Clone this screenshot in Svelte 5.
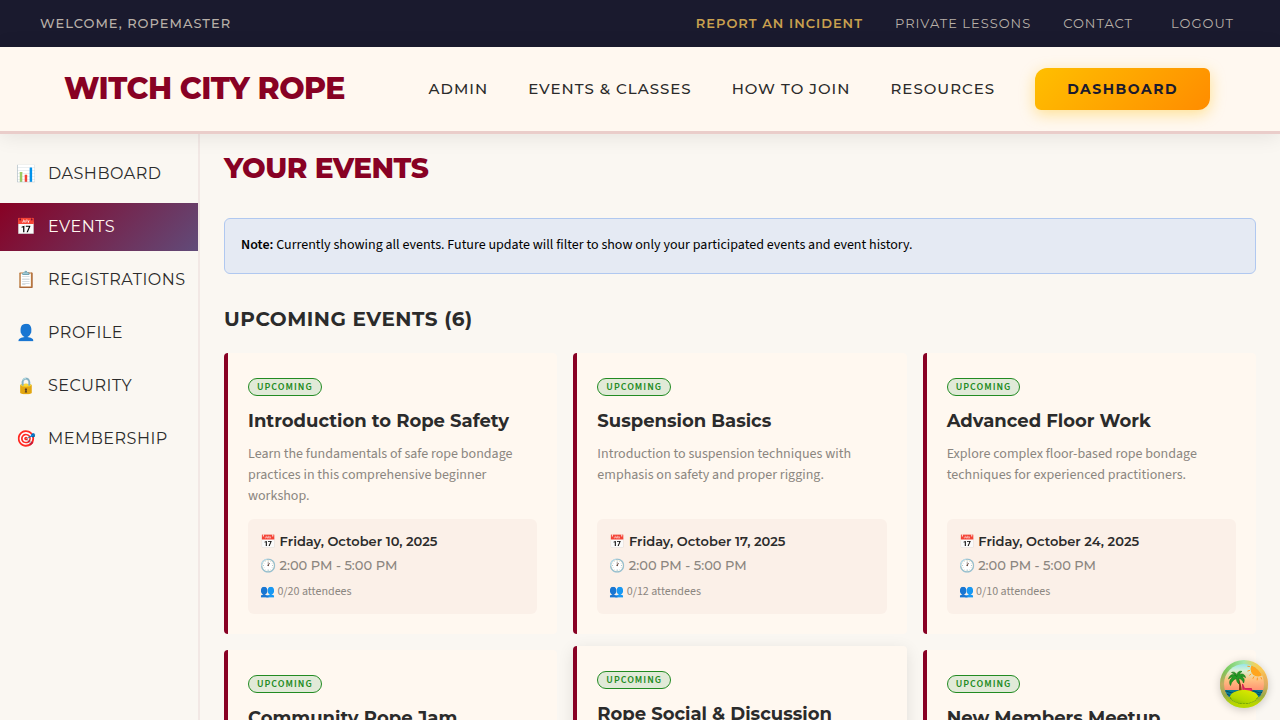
<script>
  const navLinks = ['Admin', 'Events & Classes', 'How to Join', 'Resources'];

  const sections = [
    { icon: '📊', label: 'Dashboard' },
    { icon: '📅', label: 'Events', active: true },
    { icon: '📋', label: 'Registrations' },
    { icon: '👤', label: 'Profile' },
    { icon: '🔒', label: 'Security' },
    { icon: '🎯', label: 'Membership' },
  ];

  const events = [
    {
      title: 'Introduction to Rope Safety',
      text: 'Learn the fundamentals of safe rope bondage practices in this comprehensive beginner workshop.',
      date: 'Friday, October 10, 2025',
      time: '2:00 PM - 5:00 PM',
      seats: '0/20',
    },
    {
      title: 'Suspension Basics',
      text: 'Introduction to suspension techniques with emphasis on safety and proper rigging.',
      date: 'Friday, October 17, 2025',
      time: '2:00 PM - 5:00 PM',
      seats: '0/12',
    },
    {
      title: 'Advanced Floor Work',
      text: 'Explore complex floor-based rope bondage techniques for experienced practitioners.',
      date: 'Friday, October 24, 2025',
      time: '2:00 PM - 5:00 PM',
      seats: '0/10',
    },
    { title: 'Community Rope Jam' },
    { title: 'Rope Social & Discussion', raised: true },
    { title: 'New Members Meetup' },
  ];
</script>

<div class="page">
  <div class="utility">
    <span class="welcome">Welcome, RopeMaster</span>
    <nav class="utility-links">
      <a class="report" href="#incident">Report an Incident</a>
      <a href="#lessons">Private Lessons</a>
      <a href="#contact">Contact</a>
      <button type="button">Logout</button>
    </nav>
  </div>

  <header class="header">
    <a class="brand" href="#home">Witch City Rope</a>
    <nav class="nav">
      {#each navLinks as link}
        <a href="#nav">{link}</a>
      {/each}
      <a class="cta" href="#dashboard">Dashboard</a>
    </nav>
  </header>

  <div class="body">
    <aside class="sidebar">
      <nav>
        {#each sections as item}
          <a class="side-link" class:active={item.active} href="#section">
            <span class="side-icon">{item.icon}</span>
            <span>{item.label}</span>
          </a>
        {/each}
      </nav>
    </aside>

    <main class="main">
      <h1>Your Events</h1>
      <p class="note">
        <strong>Note:</strong> Currently showing all events. Future update will filter to show only your participated events and event history.
      </p>
      <h2>Upcoming Events (6)</h2>
      <div class="grid">
        {#each events as event}
          <article class="card" class:raised={event.raised}>
            <span class="badge">Upcoming</span>
            <h3>{event.title}</h3>
            {#if event.text}
              <p class="desc">{event.text}</p>
              <div class="info">
                <p class="date">📅 {event.date}</p>
                <p class="time">🕐 {event.time}</p>
                <p class="seats">👥 {event.seats} attendees</p>
              </div>
            {/if}
          </article>
        {/each}
      </div>
    </main>
  </div>

  <button class="island" type="button" aria-label="Open tools">
    <svg viewBox="0 0 48 48" width="48" height="48" aria-hidden="true">
      <defs>
        <linearGradient id="rim-top" x1="0" y1="0" x2="1" y2="0">
          <stop offset="0" stop-color="#6cc040" />
          <stop offset="0.5" stop-color="#a5e8b0" />
          <stop offset="0.75" stop-color="#f4cf58" />
          <stop offset="1" stop-color="#ffc04a" />
        </linearGradient>
        <linearGradient id="rim-low" x1="0" y1="0" x2="0" y2="1">
          <stop offset="0.2" stop-color="#d89a68" stop-opacity="0" />
          <stop offset="0.5" stop-color="#d8a868" stop-opacity="0.8" />
          <stop offset="0.74" stop-color="#98aa4a" />
          <stop offset="0.9" stop-color="#b8d600" />
        </linearGradient>
        <linearGradient id="sky" x1="0" y1="0" x2="0" y2="1">
          <stop offset="0" stop-color="#75dcf4" />
          <stop offset="0.22" stop-color="#d6f2d6" />
          <stop offset="0.4" stop-color="#ffc483" />
          <stop offset="0.65" stop-color="#ff8f70" />
        </linearGradient>
        <linearGradient id="hill" x1="0.2" y1="1" x2="0.8" y2="0">
          <stop offset="0" stop-color="#6fae00" />
          <stop offset="0.4" stop-color="#b3d800" />
          <stop offset="1" stop-color="#e0ea00" />
        </linearGradient>
        <clipPath id="port"><circle cx="24" cy="24" r="20" /></clipPath>
      </defs>
      <circle cx="24" cy="24" r="24" fill="url(#rim-top)" />
      <circle cx="24" cy="24" r="24" fill="url(#rim-low)" />
      <g clip-path="url(#port)">
        <rect width="48" height="48" fill="url(#sky)" />
        <circle cx="38" cy="9" r="7.5" fill="#ffa51e" />
        <g stroke="#ff9a1f" stroke-width="1" stroke-linecap="round">
          <path d="M29.5 6.5l-1.7-.2M29.5 10.5l-1.7.5M31 14l-1.4 1.2M33.8 16.8l-.8 1.6M37.4 18l-.2 1.9M41 17.4l.6 1.6" />
        </g>
        <rect y="30" width="48" height="18" fill="#087b94" />
        <path d="M3 32q3-2 6 0t6 0 6 0M3 35q3-2 6 0t6 0M31 32q3-2 6 0t6 0M34 35q3-2 6 0t6 0" fill="none" stroke="#064d63" stroke-width="1" />
        <path d="M0 37h48v11H0z" fill="#a9cf00" />
        <path d="M16.5 18c3 4 3 8 2.200 14h3.200c-.5-6-1.200-10-4-14.500z" fill="#8a3a16" />
        <path d="M22.500 24l2 4.500h7l.5 2.500h-9z" fill="#e62466" stroke="#ce174d" stroke-width=".8" />
        <ellipse cx="24" cy="38.500" rx="14.500" ry="8.700" fill="url(#hill)" />
        <path d="M10.500 37.500c1 8.500 24 9 27 0" fill="none" stroke="#417800" stroke-width=".8" stroke-dasharray="2 1" />
        <path d="M17 17C14 13 10 14 8.500 19c2-2 3-2 4-1.500-3 2-3.500 5-2 8 1-4 3-6 6-7 0 2 .5 4 2.500 5.500 0-3 0-4.500-.3-5.500 3 .5 4 2 4.800 4.500 1.500-3 .5-5.500-2-6.500 1.500-.2 3 .3 4 1.200-.5-4-4-4.500-6.500-2.700C20 13 21 12 22 11.500c-3-1-5 1-5 4-1-3-3-4-5.500-3 2 1 4 2.500 5.500 4.500z" fill="#249b25" stroke="#147317" stroke-width=".6" />
      </g>
    </svg>
  </button>
</div>

<style>
  :global(body) {
    margin: 0;
    background: #faf6f2;
    color: #000;
  }

  .page {
    --display: Montserrat, Inter, sans-serif;
    --text: 'Source Sans 3', 'Source Sans Pro', 'Noto Sans CJK SC', sans-serif;
    min-height: 100vh;
    display: flex;
    flex-direction: column;
    background: #faf7f2;
    font-family: var(--text);
  }

  .page * {
    box-sizing: border-box;
  }

  a {
    color: inherit;
    text-decoration: none;
  }

  h1, h2, h3, p {
    margin: 0;
  }

  .utility {
    display: flex;
    align-items: center;
    justify-content: space-between;
    padding: 13px 40px 14px;
    background: #1a1a2e;
    color: #b8b0a8;
    font: 400 13px/20px var(--display);
    letter-spacing: 1px;
    text-transform: uppercase;
  }

  .welcome {
    font-weight: 500;
  }

  .utility-links {
    display: flex;
    align-items: center;
    gap: 32px;
  }

  .utility-links .report {
    color: #c9a04e;
    font-weight: 600;
  }

  .utility-links button {
    padding: 0 6px;
    border: 0;
    background: none;
    color: inherit;
    font: inherit;
    letter-spacing: inherit;
    text-transform: inherit;
  }

  .header {
    position: relative;
    display: flex;
    align-items: center;
    justify-content: space-between;
    min-height: 87px;
    padding: 0 70px 0 64px;
    border-bottom: 3px solid #eacdca;
    background: #fff8f0;
    box-shadow: 0 2px 20px rgba(0, 0, 0, 0.09);
    font-family: var(--display);
    text-transform: uppercase;
  }

  .brand {
    color: #880124;
    font-size: 30px;
    font-weight: 800;
    line-height: 40px;
    letter-spacing: -0.5px;
  }

  .nav {
    display: flex;
    align-items: baseline;
    gap: 40px;
    color: #2b2b2b;
    font-size: 15px;
    font-weight: 500;
    letter-spacing: 1px;
  }

  .nav .cta {
    padding: 0 32px;
    border-radius: 12px 6px 12px 6px;
    background: linear-gradient(135deg, #ffbf00, #ff8c00);
    box-shadow: 0 4px 15px rgba(255, 191, 0, 0.4);
    color: #1a1a2e;
    font-size: 14px;
    font-weight: 700;
    line-height: 42px;
    letter-spacing: 1.5px;
  }

  .body {
    flex: 1;
    display: flex;
  }

  .sidebar {
    flex: 0 0 200px;
    min-width: 0;
    width: 200px;
    padding-top: 16px;
    border-right: 2px solid #f2e8e5;
  }

  .sidebar nav {
    display: flex;
    flex-direction: column;
    gap: 5px;
  }

  .side-link {
    display: flex;
    align-items: center;
    gap: 12px;
    height: 48px;
    padding: 0 12px 0 16px;
    color: #2b2b2b;
    font: 400 16px/24px var(--display);
    letter-spacing: 0.5px;
    text-transform: uppercase;
  }

  .side-link.active {
    background: linear-gradient(135deg, #880124, #614b79);
    color: #fff8f0;
  }

  .side-icon {
    flex: 0 0 20px;
    letter-spacing: 0;
  }

  .main {
    flex: 1;
    min-width: 0;
    padding: 16px 24px 24px;
  }

  h1 {
    color: #880124;
    font: 800 28px/36px var(--display);
    letter-spacing: -0.5px;
    text-transform: uppercase;
  }

  .note {
    min-height: 56px;
    margin-top: 32px;
    padding: 15px 16px;
    border: 1px solid #b0c8f0;
    border-radius: 6px;
    background: #e5eaf3;
    font-size: 14px;
    line-height: 22px;
  }

  .note strong {
    font-weight: 600;
  }

  h2 {
    margin: 30px 0 19px;
    color: #2b2b2b;
    font: 700 20px/30px var(--display);
    letter-spacing: 0.5px;
    text-transform: uppercase;
  }

  .grid {
    display: grid;
    grid-template-columns: repeat(3, minmax(0, 1fr));
    grid-auto-rows: minmax(281px, auto);
    gap: 16px;
  }

  .card {
    display: flex;
    flex-direction: column;
    padding: 25px 20px 20px;
    border-left: 4px solid #880124;
    border-radius: 4px;
    background: #fff8f0;
  }

  .card.raised {
    transform: translateY(-4px);
    box-shadow: 0 4px 16px rgba(0, 0, 0, 0.1);
  }

  .badge {
    align-self: flex-start;
    padding: 0 8px;
    border: 1px solid #228b22;
    border-radius: 9px;
    background: #e1ead8;
    color: #228b22;
    font-size: 10px;
    font-weight: 600;
    line-height: 16px;
    letter-spacing: 1px;
    text-transform: uppercase;
  }

  h3 {
    margin-top: 12px;
    color: #2b2b2b;
    font: 700 18px/26px var(--display);
  }

  .desc {
    flex: 1;
    margin: 10px 0 12px;
    color: #8b8680;
    font-size: 14px;
    line-height: 21px;
  }

  .info {
    padding: 12px;
    border-radius: 6px;
    background: #fbf0e8;
    color: #8b8680;
    font: 500 13px/20px var(--display);
  }

  .info .date {
    color: #2b2b2b;
    font-weight: 600;
  }

  .info .time {
    margin-top: 4px;
  }

  .info .seats {
    margin-top: 6px;
    font: 400 12px/21px var(--text);
  }

  .island {
    position: fixed;
    right: 12px;
    bottom: 12px;
    width: 48px;
    height: 48px;
    padding: 0;
    border: 0;
    border-radius: 50%;
    background: none;
    box-shadow: 0 2px 8px rgba(0, 0, 0, 0.2);
  }

  .island svg {
    display: block;
  }
</style>
